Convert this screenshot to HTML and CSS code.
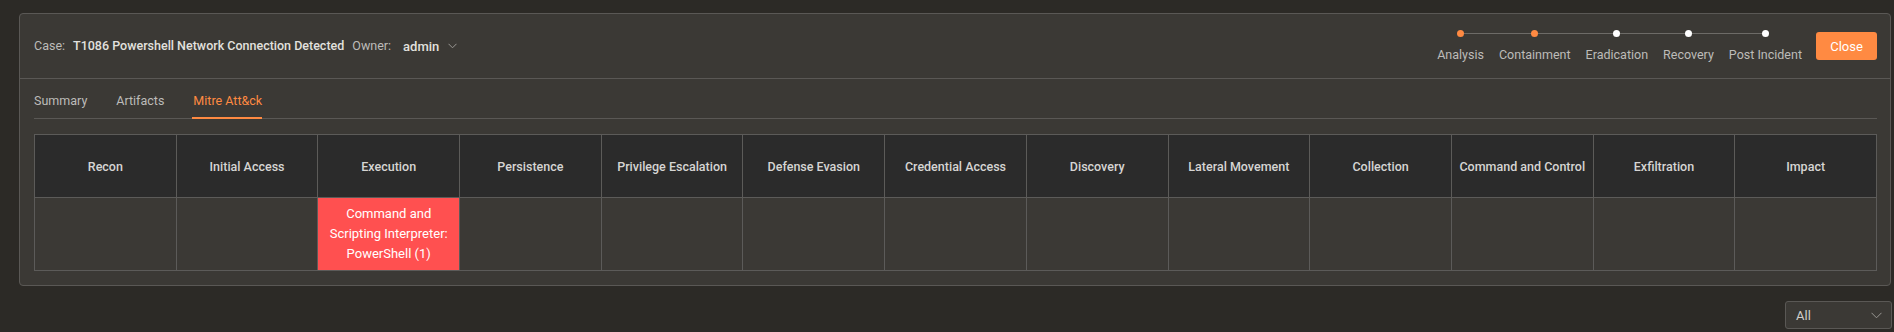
FILE: index.html
```html
<!DOCTYPE html>
<html lang="en">
<head>
<meta charset="utf-8">
<title>Case</title>
<link rel="stylesheet" href="styles.css">
</head>
<body>
<div class="panel">
  <div class="header">
    <div class="case">
      <span class="label">Case:</span>
      <span class="title">T1086 Powershell Network Connection Detected</span>
      <span class="label owner-label">Owner:</span>
      <span class="owner">admin</span>
      <svg class="chev" width="9" height="6" viewBox="0 0 9 6"><path d="M0.5 0.8 L4.5 4.8 L8.5 0.8" fill="none" stroke="#9a9894" stroke-width="1"/></svg>
    </div>
    <div class="spacer"></div>
    <div class="stepper">
      <div class="step first done"><span class="dot"></span><span class="step-label">Analysis</span></div>
      <div class="step done"><span class="dot"></span><span class="step-label">Containment</span></div>
      <div class="step"><span class="dot"></span><span class="step-label">Eradication</span></div>
      <div class="step"><span class="dot"></span><span class="step-label">Recovery</span></div>
      <div class="step last"><span class="dot"></span><span class="step-label">Post Incident</span></div>
    </div>
    <button class="close-btn">Close</button>
  </div>
  <div class="tabs">
    <div class="tab">Summary</div>
    <div class="tab">Artifacts</div>
    <div class="tab active">Mitre Att&amp;ck</div>
  </div>
  <div class="content">
    <div class="matrix">
      <div class="cell head">Recon</div>
      <div class="cell head">Initial Access</div>
      <div class="cell head">Execution</div>
      <div class="cell head">Persistence</div>
      <div class="cell head">Privilege Escalation</div>
      <div class="cell head">Defense Evasion</div>
      <div class="cell head">Credential Access</div>
      <div class="cell head">Discovery</div>
      <div class="cell head">Lateral Movement</div>
      <div class="cell head">Collection</div>
      <div class="cell head">Command and Control</div>
      <div class="cell head">Exfiltration</div>
      <div class="cell head">Impact</div>
      <div class="cell"></div>
      <div class="cell"></div>
      <div class="cell hit">Command and Scripting Interpreter: PowerShell (1)</div>
      <div class="cell"></div>
      <div class="cell"></div>
      <div class="cell"></div>
      <div class="cell"></div>
      <div class="cell"></div>
      <div class="cell"></div>
      <div class="cell"></div>
      <div class="cell"></div>
      <div class="cell"></div>
      <div class="cell"></div>
    </div>
  </div>
</div>
<div class="footer">
  <div class="select">
    <span>All</span>
    <svg width="11" height="7" viewBox="0 0 11 7"><path d="M0.5 0.8 L5.5 5.8 L10.5 0.8" fill="none" stroke="#9a9894" stroke-width="1"/></svg>
  </div>
</div>
</body>
</html>
```
FILE: styles.css
```css
* { box-sizing: border-box; }
html, body { margin: 0; padding: 0; }
body {
  background: #2c2a26;
  font-family: Roboto, "Liberation Sans", sans-serif;
  font-size: 12.5px;
  color: #bdbcb9;
  width: 1894px;
  height: 332px;
  overflow: hidden;
}
.panel {
  margin: 13px 0 0 19px;
  width: 1872px;
  height: 273px;
  background: #3b3935;
  border: 1px solid #5a5855;
  border-radius: 4px;
}
.header {
  height: 65px;
  display: flex;
  align-items: center;
  padding: 0 13px 0 14px;
  border-bottom: 1px solid #5a5855;
}
.case {
  display: flex;
  align-items: center;
  line-height: 16px;
}
.label { color: #bdbcb9; }
.title {
  margin-left: 8px;
  color: #e2e1de;
  font-weight: 500;
}
.owner-label { margin-left: 8px; }
.owner {
  margin-left: 12px;
  color: #e2e1de;
  font-weight: 500;
  font-size: 13px;
  position: relative;
  top: 1px;
}
.chev { margin-left: 9px; }
.spacer { flex: 1; }
.stepper {
  display: flex;
  gap: 15px;
  margin-right: 14px;
}
.step {
  position: relative;
  display: flex;
  flex-direction: column;
  align-items: center;
}
.step::before {
  content: "";
  position: absolute;
  top: 3px;
  left: -8px;
  right: -8px;
  height: 1px;
  background: #6d6b67;
}
.step.first::before { left: 50%; }
.step.last::before { right: 50%; }
.dot {
  position: relative;
  width: 7px;
  height: 7px;
  border-radius: 50%;
  background: #ffffff;
  margin-bottom: 10px;
}
.step.done .dot { background: #ff8a42; }
.step-label {
  line-height: 16px;
  color: #bdbcb9;
  white-space: nowrap;
}
.close-btn {
  width: 61px;
  height: 28px;
  border: 0;
  border-radius: 3px;
  background: #ff8a42;
  color: #ffffff;
  font-family: Roboto, "Liberation Sans", sans-serif;
  font-size: 13px;
  padding: 0;
}
.tabs {
  display: flex;
  gap: 29px;
  height: 40px;
  margin: 0 13px 0 14px;
  border-bottom: 1px solid #5a5855;
}
.tab {
  position: relative;
  display: flex;
  align-items: center;
  padding-top: 3px;
  color: #bdbcb9;
}
.tab.active { color: #ff8a42; }
.tab.active::after {
  content: "";
  position: absolute;
  left: -1px;
  right: 0;
  bottom: -1px;
  height: 2px;
  background: #ff8a42;
}
.content {
  padding: 15px 13px 0 14px;
}
.matrix {
  display: grid;
  grid-template-columns: repeat(13, 1fr);
  grid-template-rows: 63px 73px;
  width: 1843px;
  border-top: 1px solid #5c5b59;
  border-left: 1px solid #5c5b59;
}
.cell {
  border-right: 1px solid #5c5b59;
  border-bottom: 1px solid #5c5b59;
  display: flex;
  align-items: center;
  justify-content: center;
  text-align: center;
}
.cell.head {
  background: #2b2b2b;
  color: #d6d5d3;
  font-weight: 500;
}
.cell.hit {
  background: #ff5050;
  color: #ffffff;
  font-size: 13px;
  line-height: 20px;
  padding: 0 10px;
}
.footer {
  display: flex;
  justify-content: flex-end;
  padding: 15px 2px 0 0;
}
.select {
  width: 107px;
  height: 28px;
  border: 1px solid #5a5855;
  border-radius: 3px;
  background: #3b3935;
  display: flex;
  align-items: center;
  justify-content: space-between;
  padding: 0 9px 0 10px;
  color: #cfcecb;
  font-size: 13px;
}
```
